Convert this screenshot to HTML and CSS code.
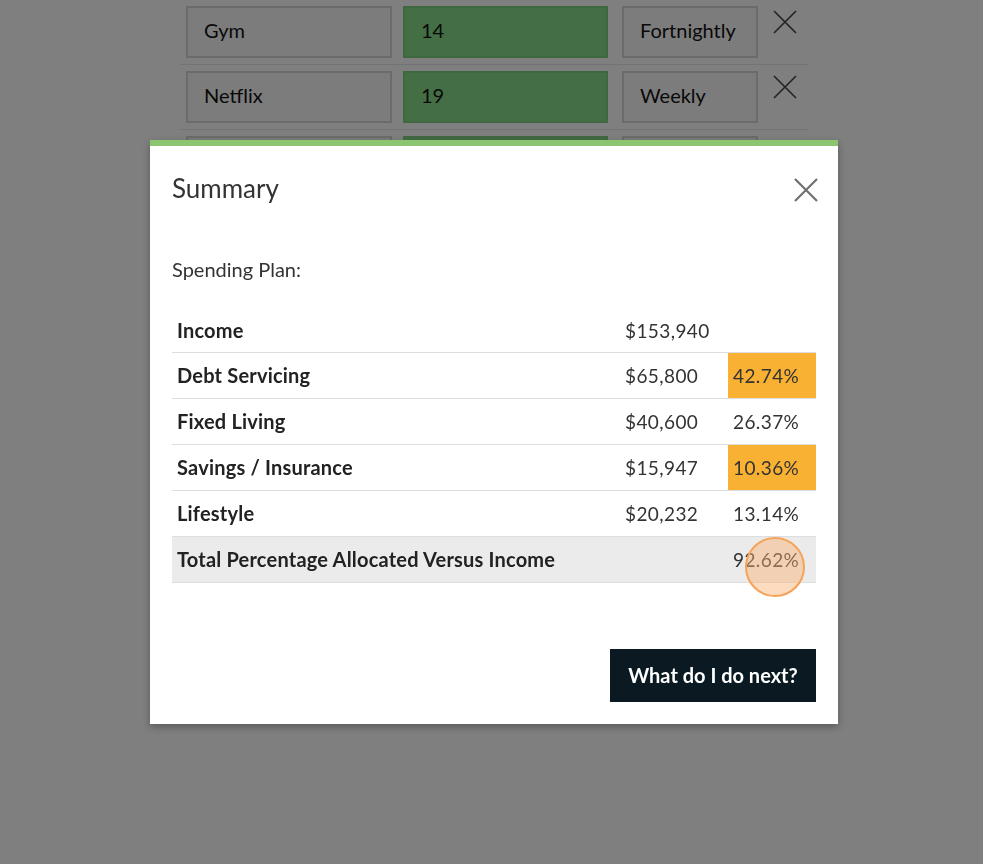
FILE: index.html
```html
<!DOCTYPE html>
<html lang="en">
<head>
    <meta charset="UTF-8">
    <meta name="viewport" content="width=device-width, initial-scale=1.0">
    <title>Spending Plan</title>
    <link rel="stylesheet" href="styles.css">
</head>
<body>
    <!-- expenses list behind the dialog -->
    <div class="expenses">
        <div class="expense-row">
            <div class="field field-name">Gym</div>
            <div class="field field-amount">14</div>
            <div class="field field-freq">Fortnightly</div>
            <svg class="remove" width="26" height="26" viewBox="0 0 26 26">
                <path d="M2 2 L24 24 M24 2 L2 24" stroke="#4a4a4a" stroke-width="1.7" fill="none"/>
            </svg>
        </div>
        <div class="expense-row">
            <div class="field field-name">Netflix</div>
            <div class="field field-amount">19</div>
            <div class="field field-freq">Weekly</div>
            <svg class="remove" width="26" height="26" viewBox="0 0 26 26">
                <path d="M2 2 L24 24 M24 2 L2 24" stroke="#4a4a4a" stroke-width="1.7" fill="none"/>
            </svg>
        </div>
        <div class="expense-row">
            <div class="field field-name">Phone</div>
            <div class="field field-amount">60</div>
            <div class="field field-freq">Monthly</div>
            <svg class="remove" width="26" height="26" viewBox="0 0 26 26">
                <path d="M2 2 L24 24 M24 2 L2 24" stroke="#4a4a4a" stroke-width="1.7" fill="none"/>
            </svg>
        </div>
    </div>

    <div class="overlay">
        <div class="modal">
            <div class="modal-header">
                <h2>Summary</h2>
                <svg class="modal-close" width="26" height="26" viewBox="0 0 26 26">
                    <path d="M2 2 L24 24 M24 2 L2 24" stroke="#707070" stroke-width="2.2" fill="none"/>
                </svg>
            </div>

            <p class="plan-title">Spending Plan:</p>

            <table class="summary-table">
                <tr>
                    <th>Income</th>
                    <td class="amount">$153,940</td>
                    <td class="pct"></td>
                </tr>
                <tr>
                    <th>Debt Servicing</th>
                    <td class="amount">$65,800</td>
                    <td class="pct warn">42.74%</td>
                </tr>
                <tr>
                    <th>Fixed Living</th>
                    <td class="amount">$40,600</td>
                    <td class="pct">26.37%</td>
                </tr>
                <tr>
                    <th>Savings / Insurance</th>
                    <td class="amount">$15,947</td>
                    <td class="pct warn">10.36%</td>
                </tr>
                <tr>
                    <th>Lifestyle</th>
                    <td class="amount">$20,232</td>
                    <td class="pct">13.14%</td>
                </tr>
                <tr class="total-row">
                    <th>Total Percentage Allocated Versus Income</th>
                    <td class="amount"></td>
                    <td class="pct"><span class="click-mark"></span>92.62%</td>
                </tr>
            </table>

            <div class="modal-footer">
                <button class="btn-next">What do I do next?</button>
            </div>
        </div>
    </div>
</body>
</html>
```

FILE: styles.css
```css
* {
    margin: 0;
    padding: 0;
    box-sizing: border-box;
}

body {
    font-family: Lato, "Open Sans", sans-serif;
    background: #ffffff;
    color: #222;
}

/* page behind */
.expenses {
    width: 628px;
    margin-left: 180px;
}

.expense-row {
    display: flex;
    align-items: flex-start;
    padding: 6px 0 6px 6px;
    border-bottom: 1px solid #e6e6e6;
}

.field {
    height: 52px;
    border: 2px solid #d6d6d6;
    background: #f9f9f9;
    font-size: 20px;
    line-height: 45px;
    padding-left: 16px;
    color: #111;
}

.field-name {
    width: 206px;
}

.field-amount {
    width: 205px;
    margin-left: 11px;
    background: #88dc88;
    border-color: #80d080;
}

.field-freq {
    width: 136px;
    margin-left: 14px;
}

.remove {
    margin-left: 14px;
    margin-top: 3px;
}

/* dialog */
.overlay {
    position: fixed;
    inset: 0;
    background: rgba(0, 0, 0, 0.5);
    display: flex;
    justify-content: center;
    align-items: flex-start;
    padding-top: 140px;
    padding-left: 5px;
}

.modal {
    width: 688px;
    background: #fff;
    border-top: 6px solid #8cc56f;
    padding: 26px 22px 22px;
    box-shadow: 0 3px 8px rgba(0, 0, 0, 0.3);
}

.modal-header {
    display: flex;
    justify-content: space-between;
    align-items: center;
}

.modal-header h2 {
    font-size: 26px;
    font-weight: 400;
    line-height: 32px;
    color: #333;
}

.modal-close {
    margin-right: -3px;
    margin-top: 3px;
}

.plan-title {
    margin-top: 53px;
    font-size: 20px;
    line-height: 24px;
    color: #333;
}

.summary-table {
    width: 100%;
    margin-top: 28px;
    border-collapse: collapse;
    font-size: 19px;
    letter-spacing: 0.4px;
}

.summary-table tr {
    height: 46px;
    border-top: 1px solid #dedede;
}

.summary-table tr:first-child {
    border-top: none;
    height: 43px;
}

.summary-table th {
    text-align: left;
    font-size: 20px;
    font-weight: 700;
    letter-spacing: 0.2px;
    padding-left: 5px;
    color: #222;
}

.summary-table td {
    color: #333;
}

.amount {
    width: 108px;
    padding-left: 5px;
}

.pct {
    width: 88px;
    padding-left: 5px;
    position: relative;
}

.pct.warn {
    background: #f8b133;
}

.total-row {
    background: #ebebeb;
    border-bottom: 1px solid #dedede;
}

.click-mark {
    position: absolute;
    left: 17px;
    top: 0;
    width: 60px;
    height: 60px;
    border-radius: 50%;
    border: 2px solid #f5a25a;
    background: rgba(248, 175, 110, 0.45);
}

.modal-footer {
    display: flex;
    justify-content: flex-end;
    margin-top: 66px;
}

.btn-next {
    height: 53px;
    width: 206px;
    background: #0b1a22;
    color: #fff;
    border: none;
    font-family: Lato, "Open Sans", sans-serif;
    font-size: 20px;
    font-weight: 700;
}
```
